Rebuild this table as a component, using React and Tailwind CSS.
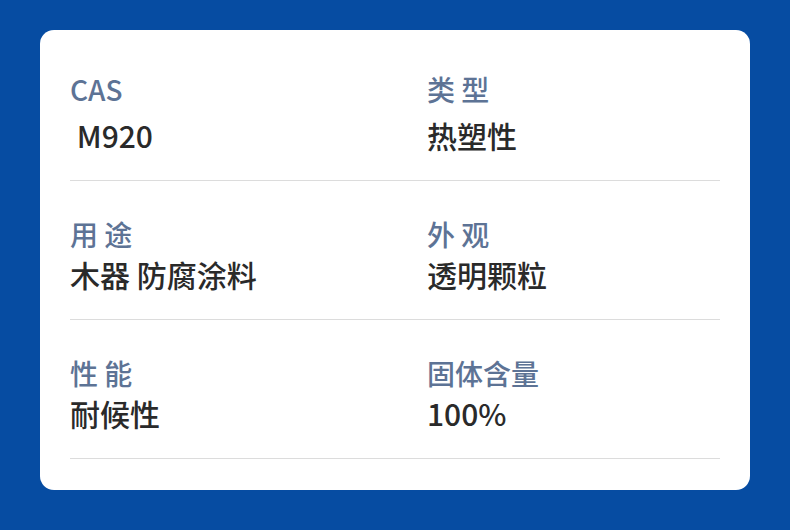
import React from 'react';

const rows = [
  [
    { label: 'CAS', value: '\u00a0M920' },
    { label: '类 型', value: '热塑性' },
  ],
  [
    { label: '用 途', value: '木器 防腐涂料' },
    { label: '外 观', value: '透明颗粒' },
  ],
  [
    { label: '性 能', value: '耐候性' },
    { label: '固体含量', value: '100%' },
  ],
];

function Field({ label, value, first, wide }) {
  return (
    <div className={wide ? 'w-[357px] shrink-0' : 'flex-1'}>
      <div className="text-[28px] leading-[40px] font-medium text-[#5d7395]">{label}</div>
      <div className={`text-[30px] leading-[40px] font-medium text-[#2a2a2a] ${first ? 'mt-[6px]' : ''}`}>{value}</div>
    </div>
  );
}

export default function App() {
  return (
    <div
      className="w-[790px] h-[530px] bg-[#064ca2] pt-[30px] px-[40px]"
      style={{ fontFamily: '"Noto Sans CJK SC", "Noto Sans", sans-serif' }}
    >
      <div className="bg-white rounded-[14px] h-[460px] px-[30px] pt-[6px]">
        {rows.map((row, i) => (
          <div key={i} className="flex pt-[33px] pb-[25px] border-b border-[#dcdcdc]">
            <Field {...row[0]} first={i === 0} wide />
            <Field {...row[1]} first={i === 0} />
          </div>
        ))}
      </div>
    </div>
  );
}
